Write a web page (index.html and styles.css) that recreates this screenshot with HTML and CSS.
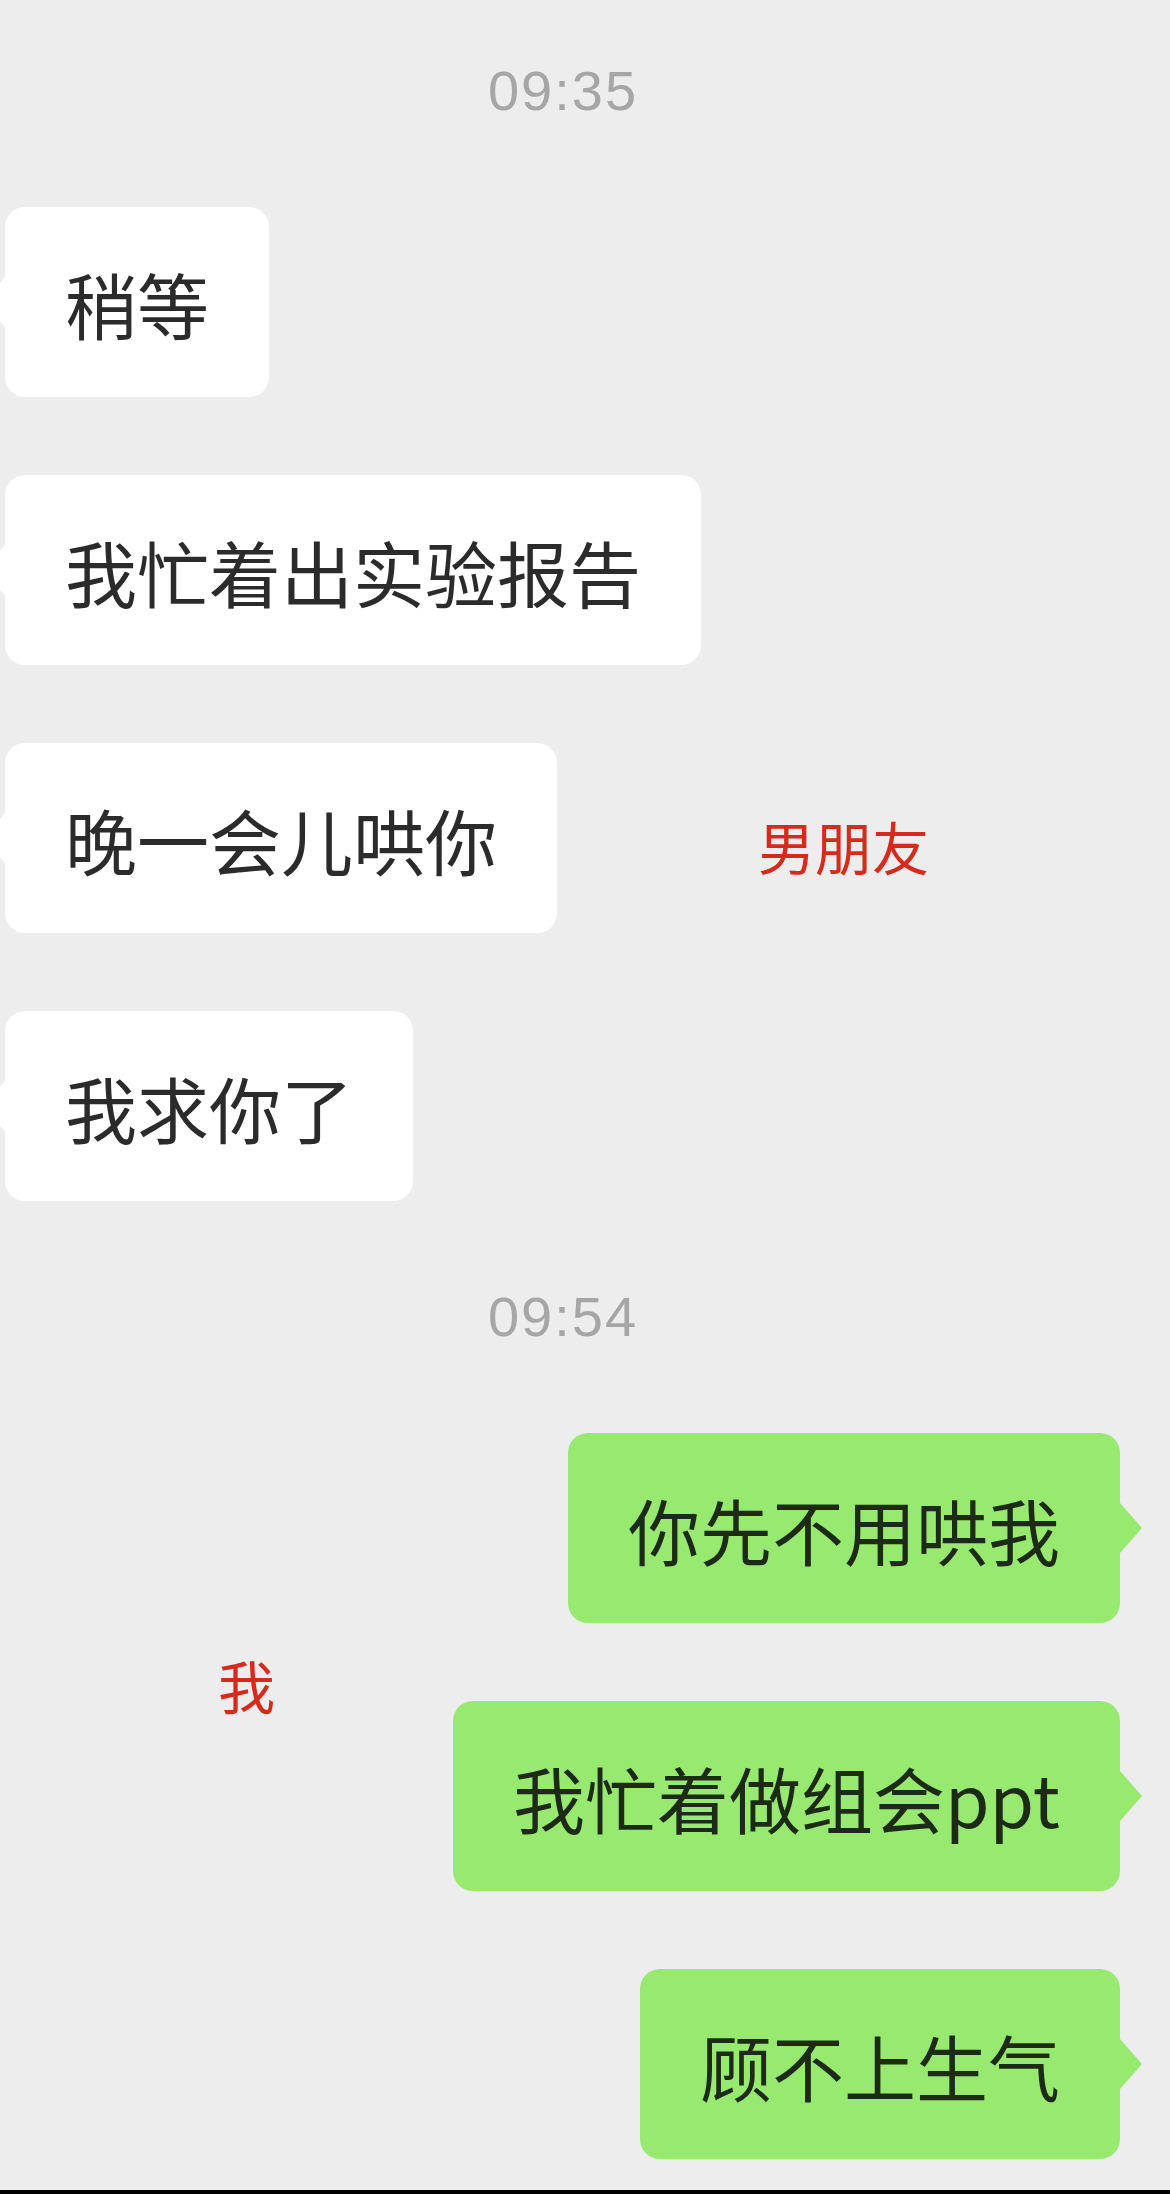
FILE: index.html
```html
<!DOCTYPE html>
<html lang="zh-CN">

<head>
    <meta charset="UTF-8">
    <meta name="viewport" content="width=device-width, initial-scale=1.0">
    <title>聊天记录</title>
    <link rel="stylesheet" href="styles.css">
</head>

<body>
    <div class="chat">
        <div class="time">09:35</div>

        <div class="row left">
            <div class="bubble">稍等</div>
        </div>
        <div class="row left">
            <div class="bubble">我忙着出实验报告</div>
        </div>
        <div class="row left">
            <div class="bubble">晚一会儿哄你</div>
            <span class="note note-him">男朋友</span>
        </div>
        <div class="row left">
            <div class="bubble">我求你了</div>
        </div>

        <div class="time">09:54</div>

        <div class="row right">
            <div class="bubble">你先不用哄我</div>
        </div>
        <div class="row right">
            <span class="note note-me">我</span>
            <div class="bubble">我忙着做组会ppt</div>
        </div>
        <div class="row right">
            <div class="bubble">顾不上生气</div>
        </div>
    </div>

    <div class="home-bar"></div>
</body>

</html>
```
FILE: styles.css
```css
html {
    overflow: hidden;
}

body {
    margin: 0;
    padding: 0;
    background-color: #ededed;
    font-family: "Noto Sans CJK SC", "Noto Sans", sans-serif;
}

.chat {
    display: flow-root;
}

.time {
    margin: 88px 0 88px;
    padding-right: 44px;
    font-family: "Liberation Sans", Arial, sans-serif;
    font-size: 56px;
    line-height: 56px;
    letter-spacing: 2px;
    text-align: center;
    color: #a6a6a6;
}

.chat > .time:first-child {
    margin-top: 63px;
}

.row {
    position: relative;
    display: flex;
    margin-bottom: 78px;
}

.row:last-child {
    margin-bottom: 0;
}

.left {
    justify-content: flex-start;
    padding-left: 5px;
}

.right {
    justify-content: flex-end;
    padding-right: 50px;
}

.bubble {
    position: relative;
    padding: 60px 60px 58px;
    font-size: 72px;
    line-height: 72px;
    border-radius: 20px;
    background-color: #ffffff;
    color: #2b2b2b;
    white-space: nowrap;
}

/* little arrow on the side of each bubble */
.bubble::before {
    content: "";
    position: absolute;
    top: 50%;
    margin-top: -25px;
    border-top: 25px solid transparent;
    border-bottom: 25px solid transparent;
}

.left .bubble::before {
    right: 100%;
    border-right: 22px solid #ffffff;
}

.right .bubble {
    background-color: #98e970;
    color: #1c2a16;
}

.right .bubble::before {
    left: 100%;
    border-left: 22px solid #98e970;
}

/* red hand-written labels */
.note {
    position: absolute;
    font-size: 57px;
    line-height: 57px;
    color: #d62a1c;
}

.note-him {
    left: 758px;
    top: 74px;
}

.note-me {
    left: 218px;
    top: -45px;
}

.home-bar {
    margin-top: 31px;
    height: 5px;
    background-color: #000;
}
```
